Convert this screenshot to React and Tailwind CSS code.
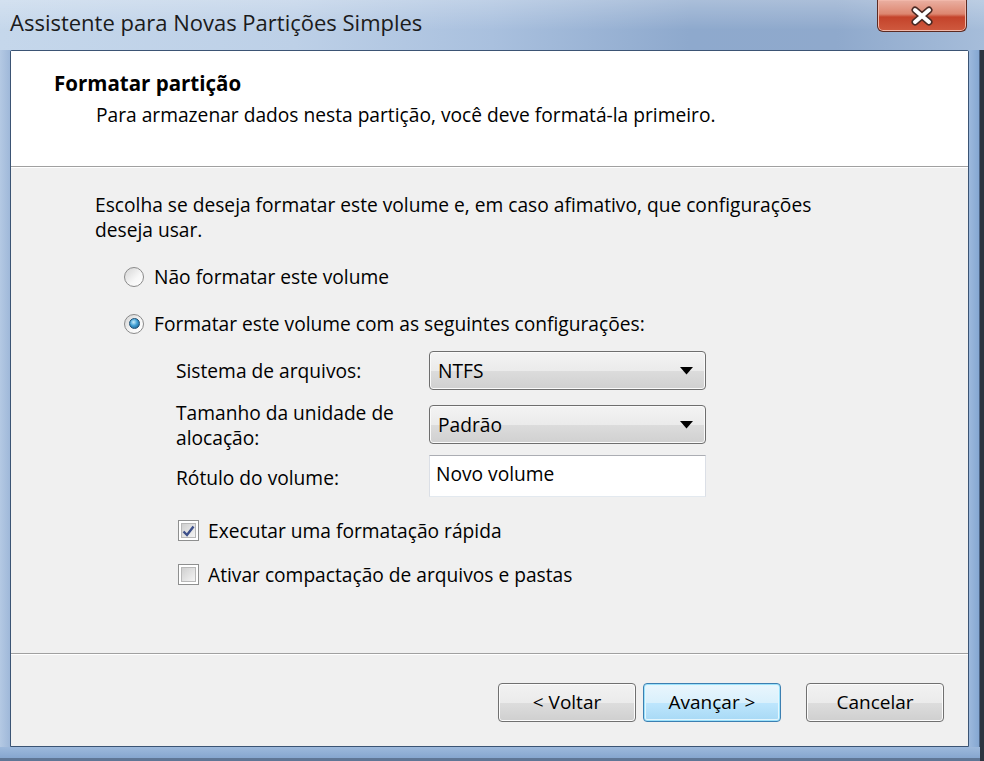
import React from 'react';

const font = "font-['Open_Sans','Noto_Sans',sans-serif]";

const Radio = ({ checked }) => (
  <div className="w-[20px] h-[20px] rounded-full border border-[#8a8a8a] bg-[linear-gradient(135deg,#d4d4d4,#f7f7f7_60%,#ffffff)] flex items-center justify-center shrink-0">
    {checked && (
      <div className="w-[11px] h-[11px] rounded-full border border-[#1b4f74] bg-[radial-gradient(circle_at_40%_35%,#c6ecfb,#3f9fd4_45%,#14507d)]" />
    )}
  </div>
);

const Checkbox = ({ checked }) => (
  <div className="w-[21px] h-[21px] border border-[#8e8f8f] bg-white p-[2px] shrink-0">
    <div className="w-full h-full border border-[#b8b8b8] bg-[linear-gradient(135deg,#cfcfcf,#f4f4f4)] flex items-center justify-center">
      {checked && (
        <svg width="13" height="12" viewBox="0 0 13 12">
          <path d="M1.5 6.5 L5 10 L11.5 1.5" fill="none" stroke="#3c4f8a" strokeWidth="2.4" />
        </svg>
      )}
    </div>
  </div>
);

const Combo = ({ value }) => (
  <div className="w-[277px] h-[39px] rounded-[4px] border border-[#6e6e6e] bg-[linear-gradient(#f3f3f3,#ebebeb_50%,#dcdcdc_51%,#d0d0d0)] shadow-[inset_0_0_0_1px_#fafafa] flex items-center pl-[8px] pr-[12px]">
    <span className="flex-1 text-black">{value}</span>
    <svg width="13" height="8" viewBox="0 0 13 8">
      <path d="M0 0 H13 L6.5 7.5 Z" fill="#000" />
    </svg>
  </div>
);

const WinButton = ({ label, primary }) => (
  <button
    className={
      primary
        ? 'w-[138px] h-[39px] rounded-[4px] border border-[#3c7fb1] bg-[linear-gradient(#eaf6fd,#d9f0fc_50%,#bee6fd_51%,#a7d9f5)] shadow-[inset_0_0_0_1px_#9be1fb,inset_0_0_0_2px_#e4f6fd] text-[19px] text-black'
        : 'w-[138px] h-[39px] rounded-[4px] border border-[#707070] bg-[linear-gradient(#f2f2f2,#ebebeb_50%,#dddddd_51%,#cfcfcf)] shadow-[inset_0_0_0_1px_#fcfcfc] text-[19px] text-black'
    }
  >
    {label}
  </button>
);

export default function App() {
  return (
    <div className={`w-[984px] h-[761px] overflow-hidden flex flex-col bg-[#98b3d6] ${font}`}>
      {/* title bar */}
      <div className="h-[50px] shrink-0 relative bg-[linear-gradient(90deg,#c5d7eb,#bdd0e7_30%,#a9c0de_50%,#8ea9cd_70%,#8fa9cc_85%,#a6bdda)]">
        <div className="absolute inset-0 bg-[linear-gradient(#ffffff40,#ffffff00_60%)]" />
        <span className="relative block pl-[10px] pt-[7px] text-[22px] leading-[30px] text-[#1b1b1b]">
          Assistente para Novas Partições Simples
        </span>
        <div className="absolute right-[17px] top-0 w-[90px] h-[32px] rounded-b-[6px] border border-t-0 border-[#5b2a22] bg-[linear-gradient(#eab0a2,#dd8670_45%,#c4432b_55%,#cf5a3f)] shadow-[inset_0_0_0_1px_#f1b8aa] flex items-center justify-center">
          <svg width="26" height="20" viewBox="0 0 26 20">
            <path d="M6 4 L20 16 M20 4 L6 16" stroke="#4a2a24" strokeWidth="7" strokeLinecap="round" />
            <path d="M6 4 L20 16 M20 4 L6 16" stroke="#ffffff" strokeWidth="4" strokeLinecap="round" />
          </svg>
        </div>
      </div>

      <div className="flex flex-1">
        {/* left frame */}
        <div className="w-[10px] bg-[linear-gradient(90deg,#b4c9e3,#9fb8d9)]" />

        {/* client */}
        <div className="w-[959px] flex flex-col border border-[#3b5474] bg-[#f0f0f0] rounded-t-[2px] text-[19.2px] leading-[25px]">
          {/* header */}
          <div className="h-[116px] bg-white pl-[43px] pt-[20px] border-b border-[#a0a0a0]">
            <div className="text-[20.5px] font-bold text-black">Formatar partição</div>
            <div className="mt-[6px] ml-[42px] text-black">
              Para armazenar dados nesta partição, você deve formatá-la primeiro.
            </div>
          </div>

          {/* body */}
          <div className="flex-1 border-t border-white pl-[84px] pt-[24px] text-black">
            <p className="w-[770px]">
              Escolha se deseja formatar este volume e, em caso afimativo, que configurações deseja usar.
            </p>

            <div className="mt-[22px] ml-[29px] flex items-center gap-[10px]">
              <Radio />
              <span>Não formatar este volume</span>
            </div>
            <div className="mt-[22px] ml-[29px] flex items-center gap-[10px]">
              <Radio checked />
              <span>Formatar este volume com as seguintes configurações:</span>
            </div>

            <div className="mt-[15px] ml-[81px] flex flex-col">
              <div className="h-[39px] flex items-center">
                <span className="w-[253px]">Sistema de arquivos:</span>
                <Combo value="NTFS" />
              </div>
              <div className="mt-[15px] h-[39px] flex items-center">
                <div className="w-[253px] flex flex-col">
                  <span>Tamanho da unidade de</span>
                  <span>alocação:</span>
                </div>
                <Combo value="Padrão" />
              </div>
              <div className="mt-[11px] h-[42px] flex items-center">
                <span className="w-[253px] pt-[2px]">Rótulo do volume:</span>
                <div className="w-[277px] h-[42px] border border-[#abadb3] border-b-[#e3e9ef] border-x-[#dbdfe6] bg-white pl-[6px] pt-[5px] text-black">
                  Novo volume
                </div>
              </div>
            </div>

            <div className="mt-[21px] ml-[83px] flex items-center gap-[9px]">
              <Checkbox checked />
              <span>Executar uma formatação rápida</span>
            </div>
            <div className="mt-[19px] ml-[83px] flex items-center gap-[9px]">
              <Checkbox />
              <span>Ativar compactação de arquivos e pastas</span>
            </div>
          </div>

          {/* footer */}
          <div className="h-[93px] border-t border-[#a0a0a0]">
            <div className="h-full border-t border-white flex justify-end items-start pt-[28px] pr-[24px]">
              <div className="flex gap-[7px]">
                <WinButton label="< Voltar" />
                <WinButton label="Avançar >" primary />
              </div>
              <div className="ml-[25px]">
                <WinButton label="Cancelar" />
              </div>
            </div>
          </div>
        </div>

        {/* right frame */}
        <div className="w-[15px] flex">
          <div className="w-[11px] bg-[linear-gradient(90deg,#9cb9dd,#85a7d2)] border-r border-[#4b6383]" />
          <div className="flex-1 bg-[#2c3440]" />
        </div>
      </div>

      {/* bottom frame */}
      <div className="h-[14px] shrink-0 flex">
        <div className="w-[980px] bg-[linear-gradient(#9db9dc,#86a6cf)] border-b-[3px] border-[#5f7696]" />
        <div className="flex-1 bg-[#2c3440]" />
      </div>
    </div>
  );
}
